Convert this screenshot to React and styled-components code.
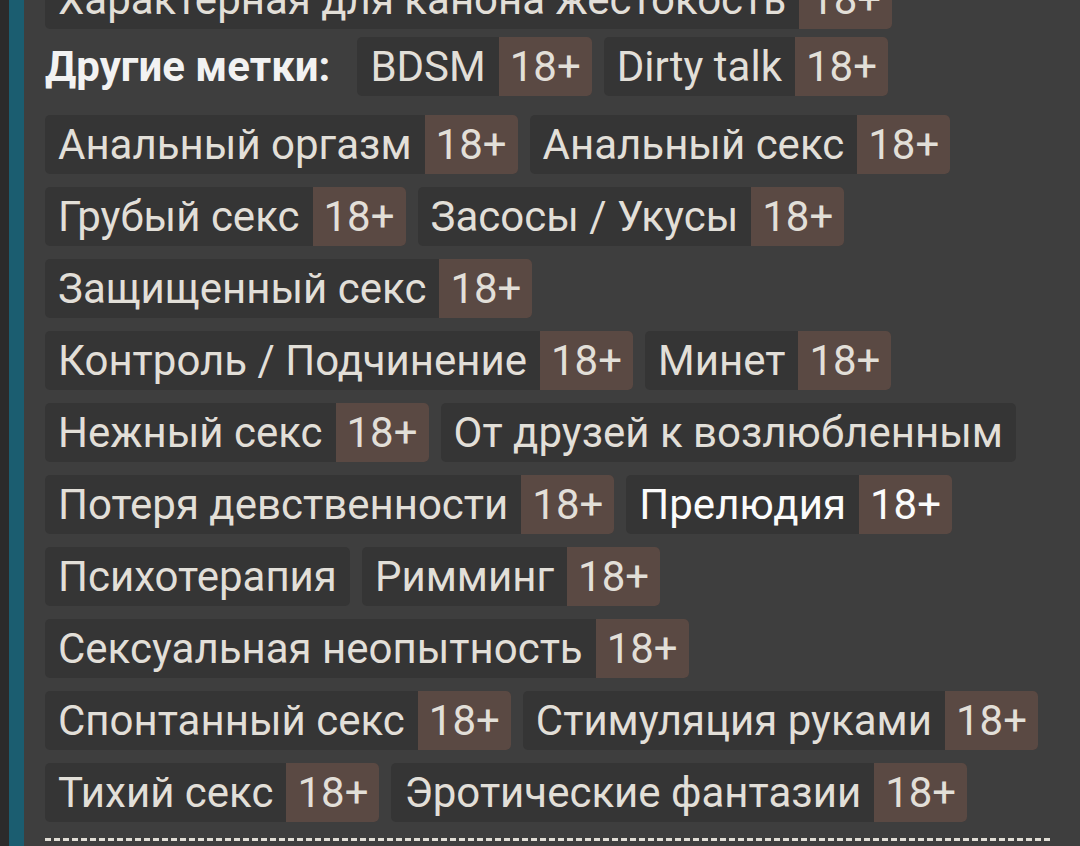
import React from "react";
import styled, { createGlobalStyle } from "styled-components";

const GlobalStyle = createGlobalStyle`
  html, body {
    margin: 0;
    padding: 0;
    background: #3e3e3e;
  }
  body {
    font-family: Roboto, "Noto Sans", "Liberation Sans", sans-serif;
  }
`;

const Page = styled.div`
  display: flex;
  height: 846px;
  overflow: hidden;
  background: #3e3e3e;
`;

const Gutter = styled.div`
  flex: 0 0 9px;
  background: #2b2b2b;
`;

const Accent = styled.div`
  flex: 0 0 15px;
  background: #1b5d70;
`;

const Content = styled.div`
  flex: 1;
  padding: 0 30px 0 21px;
  margin-top: -30px;
`;

const TagList = styled.div`
  display: flex;
  flex-wrap: wrap;
  align-items: center;
  gap: 13px 12px;
  margin-bottom: ${(p) => p.$after || 0}px;
`;

const Label = styled.span`
  font-size: 42px;
  font-weight: 700;
  color: #f2f2f2;
  margin-right: 15px;
`;

const Tag = styled.span`
  display: inline-flex;
  height: 59px;
  border-radius: 5px;
  overflow: hidden;
  background: #353535;
  font-size: 42px;
  line-height: 59px;
  color: ${(p) => (p.$liked ? "#fbfbfb" : "#e2dfd8")};
  white-space: nowrap;
`;

const TagName = styled.span`
  padding: 0 13px;
`;

const Adult = styled.span`
  padding: 0 11px;
  background: #5a4943;
`;

const Divider = styled.div`
  height: 3px;
  margin-top: 16px;
  background: repeating-linear-gradient(
    90deg,
    #e0ddd5 0 6px,
    transparent 6px 9px
  );
`;

const warnings = [{ name: "Характерная для канона жестокость", adult: true }];

const headTags = [
  { name: "BDSM", adult: true },
  { name: "Dirty talk", adult: true },
];

const tags = [
  { name: "Анальный оргазм", adult: true },
  { name: "Анальный секс", adult: true },
  { name: "Грубый секс", adult: true },
  { name: "Засосы / Укусы", adult: true },
  { name: "Защищенный секс", adult: true },
  { name: "Контроль / Подчинение", adult: true },
  { name: "Минет", adult: true },
  { name: "Нежный секс", adult: true },
  { name: "От друзей к возлюбленным" },
  { name: "Потеря девственности", adult: true },
  { name: "Прелюдия", adult: true, liked: true },
  { name: "Психотерапия" },
  { name: "Римминг", adult: true },
  { name: "Сексуальная неопытность", adult: true },
  { name: "Спонтанный секс", adult: true },
  { name: "Стимуляция руками", adult: true },
  { name: "Тихий секс", adult: true },
  { name: "Эротические фантазии", adult: true },
];

const TagItem = ({ tag }) => (
  <Tag $liked={tag.liked}>
    <TagName>{tag.name}</TagName>
    {tag.adult ? <Adult>18+</Adult> : null}
  </Tag>
);

export default function App() {
  return (
    <>
      <GlobalStyle />
      <Page>
        <Gutter />
        <Accent />
        <Content>
          <TagList $after={8}>
            {warnings.map((t) => (
              <TagItem key={t.name} tag={t} />
            ))}
          </TagList>
          <TagList $after={19}>
            <Label>Другие метки:</Label>
            {headTags.map((t) => (
              <TagItem key={t.name} tag={t} />
            ))}
          </TagList>
          <TagList>
            {tags.map((t) => (
              <TagItem key={t.name} tag={t} />
            ))}
          </TagList>
          <Divider />
        </Content>
      </Page>
    </>
  );
}
